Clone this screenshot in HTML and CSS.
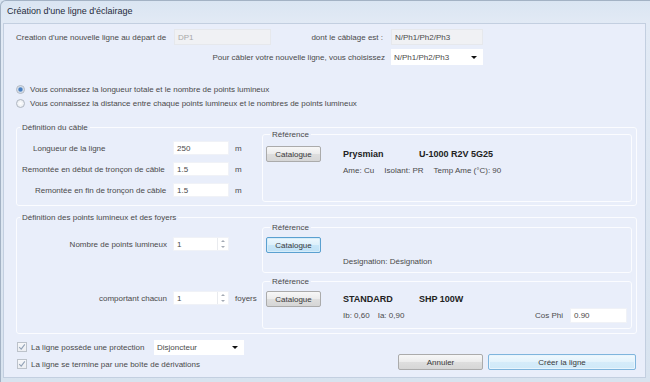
FILE: index.html
```html
<!DOCTYPE html>
<html>
<head>
    <meta charset="utf-8">
    <link rel="stylesheet" href="styles.css">
</head>
<body>
<div class="window">
    <div class="titlebar">Création d'une ligne d'éclairage</div>

    <div class="client">
        <div class="origin">
            <span class="lbl">Creation d'une nouvelle ligne au départ de</span>
            <span class="field readonly disabled">DP1</span>
            <span class="lbl right">dont le câblage est :</span>
            <span class="field readonly">N/Ph1/Ph2/Ph3</span>
            <span class="lbl right span3">Pour câbler votre nouvelle ligne, vous choisissez</span>
            <span class="combo">N/Ph1/Ph2/Ph3</span>
        </div>

        <div class="radios">
            <div class="radio-row"><span class="radio checked"></span>Vous connaissez la longueur totale et le nombre de points lumineux</div>
            <div class="radio-row"><span class="radio"></span>Vous connaissez la distance entre chaque points lumineux et le nombres de points lumineux</div>
        </div>

        <fieldset class="group">
            <legend>Définition du câble</legend>
            <div class="cable-body">
                <div class="fields">
                    <div class="frow"><span class="lbl pad-long">Longueur de la ligne</span><span class="field">250</span><span class="unit">m</span></div>
                    <div class="frow"><span class="lbl pad-start">Remontée en début de tronçon de câble</span><span class="field">1.5</span><span class="unit">m</span></div>
                    <div class="frow"><span class="lbl pad-end">Remontée en fin de tronçon de câble</span><span class="field">1.5</span><span class="unit">m</span></div>
                </div>
                <fieldset class="ref ref-cable">
                    <legend>Référence</legend>
                    <div class="ref-head">
                        <button class="btn">Catalogue</button>
                        <span class="ref-name brand">Prysmian</span>
                        <span class="ref-name">U-1000 R2V 5G25</span>
                    </div>
                    <div class="ref-info">
                        <span class="info-item">Ame: Cu</span>
                        <span class="info-item">Isolant: PR</span>
                        <span class="info-item">Temp Ame (°C): 90</span>
                    </div>
                </fieldset>
            </div>
        </fieldset>

        <fieldset class="group group-points">
            <legend>Définition des points lumineux et des foyers</legend>
            <div class="ref-row row-points">
                <div class="fields">
                    <div class="frow">
                        <span class="lbl right">Nombre de points lumineux</span>
                        <span class="field spin">1<span class="spin-arrows"><i></i><i class="down"></i></span></span>
                    </div>
                </div>
                <fieldset class="ref ref-points">
                    <legend>Référence</legend>
                    <div class="ref-head">
                        <button class="btn focused">Catalogue</button>
                    </div>
                    <div class="ref-info">Designation: Désignation</div>
                </fieldset>
            </div>
            <div class="ref-row row-lamps">
                <div class="fields">
                    <div class="frow">
                        <span class="lbl right">comportant chacun</span>
                        <span class="field spin">1<span class="spin-arrows"><i></i><i class="down"></i></span></span>
                        <span class="unit">foyers</span>
                    </div>
                </div>
                <fieldset class="ref ref-lamps">
                    <legend>Référence</legend>
                    <div class="ref-head">
                        <button class="btn">Catalogue</button>
                        <span class="ref-name brand">STANDARD</span>
                        <span class="ref-name">SHP 100W</span>
                    </div>
                    <div class="ref-info info-row">
                        <span class="info-item">Ib: 0,60</span>
                        <span class="info-item">Ia: 0,90</span>
                        <span class="cos-label">Cos Phi</span>
                        <span class="field cos">0.90</span>
                    </div>
                </fieldset>
            </div>
        </fieldset>

        <div class="bottom">
            <div class="checks">
                <div class="check-row">
                    <span class="checkbox"><svg width="8" height="8" viewBox="0 0 8 8"><path d="M1.2 4.2 L3.2 6.2 L6.8 1.4" fill="none" stroke="#93a3b8" stroke-width="1.1"/></svg></span>
                    <span class="check-text">La ligne possède une protection</span>
                    <span class="combo protection">Disjoncteur</span>
                </div>
                <div class="check-row">
                    <span class="checkbox"><svg width="8" height="8" viewBox="0 0 8 8"><path d="M1.2 4.2 L3.2 6.2 L6.8 1.4" fill="none" stroke="#93a3b8" stroke-width="1.1"/></svg></span>
                    <span>La ligne se termine par une boîte de dérivations</span>
                </div>
            </div>
            <div class="actions">
                <button class="btn cancel">Annuler</button>
                <button class="btn default">Créer la ligne</button>
            </div>
        </div>
    </div>
</div>
</body>
</html>
```

FILE: styles.css
```css
* {
    margin: 0;
    padding: 0;
    box-sizing: border-box;
}

body {
    width: 650px;
    height: 382px;
    overflow: hidden;
    font-family: "Liberation Sans", Arial, sans-serif;
    font-size: 8px;
    color: #4a4a4a;
    background: #d9e4f1;
}

.window {
    width: 650px;
    height: 382px;
    display: flex;
    flex-direction: column;
    background: linear-gradient(#dae5f2, #e2eaf5 22px, #d8e3ef);
    border-top: 1px solid #a3b2c4;
    border-left: 1px solid #a3b2c4;
    border-top-left-radius: 6px;
}

.titlebar {
    height: 22px;
    line-height: 20px;
    padding-left: 6px;
    font-size: 9px;
    color: #1f2b3b;
}

.client {
    flex: 1;
    margin: 0 4px 4px 2px;
    padding: 5px 8px 0 12px;
    background: #e9eefa;
    border: 1px solid #c3cfe0;
}

.lbl {
    display: flex;
    align-items: center;
    white-space: nowrap;
}

.lbl.right {
    justify-content: flex-end;
    padding-right: 8px;
}

/* Top origin rows */
.origin {
    display: grid;
    grid-template-columns: 158px 97px 120px 92px;
    grid-auto-rows: 16px;
    row-gap: 4px;
}

.origin .span3 {
    grid-column: 1 / 4;
    padding-right: 6px;
}

.field {
    display: flex;
    align-items: center;
    height: 14px;
    width: 56px;
    padding-left: 3px;
    background: white;
    border: 1px solid #f0f2f7;
    white-space: nowrap;
}

.origin .field {
    width: auto;
    height: auto;
}

.field.readonly {
    background: #f0f1f4;
    border-color: #e6e8ec;
}

.field.disabled {
    color: #a8a8a8;
}

.combo {
    display: flex;
    align-items: center;
    padding-left: 3px;
    background: white;
    white-space: nowrap;
}

.combo::after {
    content: "";
    margin-left: auto;
    margin-right: 6px;
    border-left: 3px solid transparent;
    border-right: 3px solid transparent;
    border-top: 3px solid #111;
}

/* Radio choices */
.radios {
    margin-top: 17px;
}

.radio-row {
    display: flex;
    align-items: center;
    height: 14px;
    white-space: nowrap;
}

.radio {
    width: 9px;
    height: 9px;
    margin-right: 5px;
    flex-shrink: 0;
    border-radius: 50%;
    border: 1px solid #b0b7c1;
    background: radial-gradient(circle, #ffffff, #e1e5eb);
}

.radio.checked {
    background: radial-gradient(circle, #4a80c2 0, #4a80c2 1.6px, #c9d6e6 2.6px, #f4f6f9 4px);
}

/* Group boxes */
fieldset {
    min-width: 0;
    border: 1px solid #fbfcff;
    border-radius: 3px;
}

legend {
    font-size: 8px;
    line-height: 9px;
    padding: 0 2px;
    margin-left: 3px;
    color: #4a4a4a;
}

.group {
    margin-top: 13px;
    padding: 0 4px 3px 0;
}

.group-points {
    margin-top: 7px;
    padding-bottom: 4px;
}

.cable-body,
.ref-row {
    display: flex;
    align-items: flex-start;
}

.fields {
    width: 245px;
    flex-shrink: 0;
    padding-top: 9px;
    display: flex;
    flex-direction: column;
    gap: 7px;
}

.ref-row .fields {
    padding-top: 14px;
}

.frow {
    display: flex;
    align-items: center;
    height: 14px;
}

.frow .lbl {
    width: 156px;
}

.frow .lbl.right {
    padding-right: 6px;
}

.pad-long { padding-left: 16px; }
.pad-start { padding-left: 5px; }
.pad-end { padding-left: 18px; }

.unit {
    padding-left: 6px;
}

.spin {
    padding-right: 1px;
}

.spin-arrows {
    margin-left: auto;
    width: 10px;
    height: 12px;
    display: flex;
    flex-direction: column;
    border-left: 1px solid #e9ebef;
}

.spin-arrows i {
    flex: 1;
    display: flex;
    align-items: center;
    justify-content: center;
}

.spin-arrows i::before {
    content: "";
    border-left: 2px solid transparent;
    border-right: 2px solid transparent;
    border-bottom: 2px solid #a3aab4;
}

.spin-arrows i.down::before {
    border-bottom: none;
    border-top: 2px solid #a3aab4;
}

/* Reference boxes */
.ref {
    flex: 1;
    padding: 0 4px 0 3px;
}

.ref legend {
    margin-left: 4px;
}

.ref-cable {
    margin-top: -2px;
    height: 72px;
}

.row-points {
    margin-top: 1px;
}

.row-lamps {
    margin-top: 4px;
}

.ref-points {
    height: 50px;
}

.ref-lamps {
    height: 52px;
}

.ref-head {
    display: flex;
    align-items: center;
    height: 16px;
    margin-top: 5px;
}

.ref-cable .ref-head {
    margin-top: 7px;
}

.ref-name {
    font-weight: bold;
    font-size: 9px;
    color: #222;
    white-space: nowrap;
}

.ref-name.brand {
    width: 76px;
    margin-left: 22px;
}

.ref-info {
    margin: 4px 0 0 77px;
    line-height: 10px;
    white-space: nowrap;
}

.info-item {
    margin-right: 8px;
}

.info-row {
    display: flex;
    align-items: center;
    height: 15px;
    margin-top: 1px;
}

.cos-label {
    margin-left: auto;
}

.field.cos {
    width: 57px;
    height: 15px;
    margin-left: 7px;
}

/* Buttons */
.btn {
    width: 55px;
    height: 16px;
    font-family: inherit;
    font-size: 8px;
    color: #3a3a3a;
    border: 1px solid #ababab;
    border-radius: 2px;
    background: linear-gradient(#f7f7f7, #ececec 48%, #dedede 52%, #d6d6d6);
}

.btn.focused {
    border-color: #5aa0d0;
    background: linear-gradient(#edf7fd, #ddf0fb 48%, #c8e6f8 52%, #bfe1f6);
    box-shadow: inset 0 0 0 1px #d6ecf9;
}

/* Bottom area */
.bottom {
    display: flex;
    align-items: flex-end;
    margin-top: 5px;
}

.checks {
    display: flex;
    flex-direction: column;
    gap: 1px;
    padding-left: 1px;
}

.check-row {
    display: flex;
    align-items: center;
    height: 16px;
    white-space: nowrap;
}

.checkbox {
    width: 10px;
    height: 10px;
    margin-right: 4px;
    display: flex;
    align-items: center;
    justify-content: center;
    border: 1px solid #bcc2ca;
    background: linear-gradient(#f6f7f9, #eceef2);
}

.check-text {
    width: 123px;
}

.combo.protection {
    width: 90px;
    height: 15px;
}

.actions {
    margin: 0 1px 2px auto;
    display: flex;
    gap: 5px;
}

.btn.cancel {
    width: 85px;
}

.btn.default {
    width: 148px;
    border-color: #7fb5dd;
    background: linear-gradient(#f1f9fe, #e3f3fc 48%, #d5ecfa 52%, #d0e9f8);
    box-shadow: inset 0 0 0 1px #e9f5fd;
}
```
